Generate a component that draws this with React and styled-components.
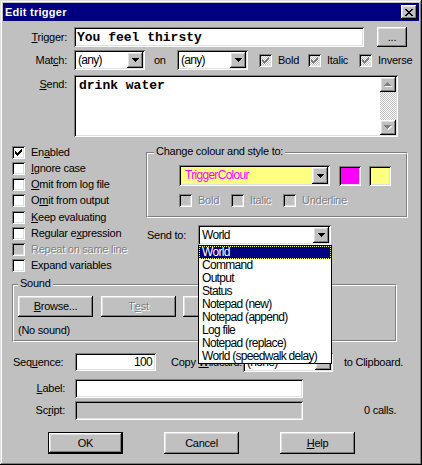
import React from "react"
import styled, { createGlobalStyle, css } from "styled-components"

const GlobalStyle = createGlobalStyle`
	html, body {
		margin: 0;
		padding: 0;
		background: #c0c0c0;
	}
	body {
		font-family: "Liberation Sans", Arial, sans-serif;
		font-size: 11px;
		letter-spacing: -0.25px;
		line-height: 13px;
		color: #000;
	}
	u {
		text-decoration-thickness: 1px;
		text-underline-offset: 1px;
	}
`

// win95 bevels
const raised = css`
	box-shadow: inset -1px -1px #000, inset 1px 1px #fff, inset -2px -2px #808080, inset 2px 2px #dfdfdf;
`
const sunken = css`
	box-shadow: inset 1px 1px #808080, inset -1px -1px #fff, inset 2px 2px #000, inset -2px -2px #dfdfdf;
`
const dither = css`
	background-color: #c0c0c0;
	background-image: conic-gradient(#fff 25%, #c0c0c0 0 50%, #fff 0 75%, #c0c0c0 0);
	background-size: 2px 2px;
`
const disabledText = css`
	color: #808080;
	text-shadow: 1px 1px #fff;
`

const CHECK = ["......#", ".....##", "#...###", "##.###.", "#####..", ".###...", "..#...."]
const DOWN = ["#######", ".#####.", "..###..", "...#..."]
const UP = [...DOWN].reverse()
const CLOSE = ["##....##", ".##..##.", "..####..", "...##...", "..####..", ".##..##.", "##....##"]

const PixSvg = styled.svg`
	display: block;
`

const Pixels = ({ map, color = "#000", shadow }) => {
	const extra = shadow ? 1 : 0
	const cells = (d, fill) =>
		map.flatMap((row, y) =>
			[...row].map((c, x) =>
				c === "#" ? <rect key={`${d}-${x}-${y}`} x={x + d} y={y + d} width="1" height="1" fill={fill} /> : null
			)
		)
	return (
		<PixSvg width={map[0].length + extra} height={map.length + extra} shapeRendering="crispEdges">
			{shadow && cells(1, shadow)}
			{cells(0, color)}
		</PixSvg>
	)
}

const Window = styled.div`
	box-sizing: border-box;
	width: 422px;
	height: 465px;
	padding: 3px;
	background: #c0c0c0;
	display: flex;
	flex-direction: column;
	box-shadow: inset -1px -1px #000, inset 1px 1px #dfdfdf, inset -2px -2px #808080, inset 2px 2px #fff;
`

const TitleBar = styled.div`
	height: 18px;
	background: #000080;
	display: flex;
	align-items: center;
	justify-content: space-between;
`

const Title = styled.span`
	color: #fff;
	font-weight: bold;
	font-size: 11px;
	letter-spacing: 0.25px;
	margin-left: 2px;
`

const CloseButton = styled.span`
	width: 16px;
	height: 14px;
	margin-right: 2px;
	background: #c0c0c0;
	display: flex;
	align-items: center;
	justify-content: center;
	${raised}
`

const Body = styled.div`
	position: relative;
	flex: 1;
	display: flex;
	flex-direction: column;
`

const Row = styled.div`
	display: flex;
	align-items: ${(p) => p.$align || "center"};
	height: ${(p) => p.$h}px;
	margin-top: ${(p) => p.$top}px;
	margin-left: ${(p) => p.$left || 0}px;
	flex-shrink: 0;
`

const FieldLabel = styled.span`
	width: ${(p) => p.$w || 64}px;
	margin-right: ${(p) => p.$gap ?? 7}px;
	padding-top: ${(p) => p.$pt || 0}px;
	text-align: ${(p) => p.$left ? "left" : "right"};
	flex-shrink: 0;
	${(p) => p.$disabled && disabledText}
`

const TextField = styled.div`
	box-sizing: border-box;
	width: ${(p) => p.$w}px;
	height: ${(p) => p.$h || 20}px;
	padding: 0 ${(p) => p.$right ? 4 : 3}px;
	display: flex;
	align-items: center;
	justify-content: ${(p) => p.$right ? "flex-end" : "flex-start"};
	background: ${(p) => p.$disabled ? "#c0c0c0" : "#fff"};
	${sunken}
`

const MonoText = styled.span`
	font-family: "Liberation Mono", "DejaVu Sans Mono", monospace;
	font-weight: bold;
	font-size: 13px;
	letter-spacing: 0;
`

const ValueText = styled.span`
	font-size: 12px;
	letter-spacing: -0.7px;
	color: ${(p) => p.$color || "#000"};
`

const PushButton = styled.span`
	box-sizing: border-box;
	width: ${(p) => p.$w || 75}px;
	height: ${(p) => p.$h || 21}px;
	margin-left: ${(p) => p.$ml || 0}px;
	display: flex;
	align-items: center;
	justify-content: center;
	background: #c0c0c0;
	flex-shrink: 0;
	${raised}
	${(p) => p.$disabled && disabledText}
	${(p) =>
		p.$default &&
		css`
			border: 1px solid #000;
		`}
`

const Combo = styled.div`
	box-sizing: border-box;
	width: ${(p) => p.$w}px;
	height: ${(p) => p.$h || 20}px;
	margin-left: ${(p) => p.$ml || 0}px;
	padding: 2px;
	display: flex;
	background: ${(p) => p.$bg || "#fff"};
	flex-shrink: 0;
	position: relative;
	${sunken}
`

const ComboValue = styled.span`
	flex: 1;
	display: flex;
	align-items: center;
	padding-left: ${(p) => p.$pl ?? 2}px;
	overflow: hidden;
	white-space: nowrap;
`

const ArrowButton = styled.span`
	width: 16px;
	background: #c0c0c0;
	display: flex;
	align-items: center;
	justify-content: center;
	${raised}
`

const Box = styled.span`
	box-sizing: border-box;
	width: 13px;
	height: 13px;
	flex-shrink: 0;
	display: flex;
	align-items: center;
	justify-content: center;
	background: ${(p) => p.$disabled ? "#c0c0c0" : "#fff"};
	${(p) => p.$dither && dither}
	${sunken}
`

const CheckItem = styled.span`
	display: flex;
	align-items: center;
	gap: 6px;
	height: ${(p) => p.$h ? `${p.$h}px` : "auto"};
	width: ${(p) => p.$w ? `${p.$w}px` : "auto"};
	flex-shrink: 0;
	white-space: nowrap;
	${(p) => p.$disabled && disabledText}
`

const CheckBox = ({ label, checked, dither, disabled, w, h }) => (
	<CheckItem $w={w} $h={h} $disabled={disabled}>
		<Box $dither={dither} $disabled={disabled}>
			{checked && <Pixels map={CHECK} color={dither ? "#808080" : "#000"} />}
		</Box>
		<span>{label}</span>
	</CheckItem>
)

const Memo = styled.div`
	box-sizing: border-box;
	width: 324px;
	height: 62px;
	padding: 2px;
	display: flex;
	background: #fff;
	${sunken}
`

const MemoText = styled.div`
	flex: 1;
	padding: 1px 3px;
	line-height: 14px;
`

const ScrollBar = styled.div`
	width: 16px;
	display: flex;
	flex-direction: column;
`

const ScrollArrow = styled.span`
	height: 15px;
	background: #c0c0c0;
	display: flex;
	align-items: center;
	justify-content: center;
	${raised}
`

const ScrollTrack = styled.span`
	flex: 1;
	${dither}
`

const Middle = styled.div`
	display: flex;
	margin-top: 7px;
	flex-shrink: 0;
`

const OptionList = styled.div`
	width: 134px;
	margin-left: 9px;
	display: flex;
	flex-direction: column;
`

const RightColumn = styled.div`
	width: 262px;
	display: flex;
	flex-direction: column;
`

const GroupOuter = styled.div`
	box-sizing: border-box;
	width: ${(p) => p.$w}px;
	height: ${(p) => p.$h}px;
	margin-top: ${(p) => p.$top}px;
	margin-left: ${(p) => p.$left || 0}px;
	border: 1px solid;
	border-color: #808080 #fff #fff #808080;
	flex-shrink: 0;
`

const GroupInner = styled.div`
	box-sizing: border-box;
	height: 100%;
	border: 1px solid;
	border-color: #fff #808080 #808080 #fff;
	display: flex;
	flex-direction: column;
	align-items: flex-start;
`

const Legend = styled.span`
	margin: -9px 0 0 ${(p) => p.$x}px;
	padding: 0 2px;
	background: #c0c0c0;
	line-height: 13px;
`

const Swatch = styled.span`
	box-sizing: border-box;
	width: 22px;
	height: 20px;
	margin-left: ${(p) => p.$ml}px;
	background: ${(p) => p.$color};
	${sunken}
`

const DropList = styled.div`
	position: absolute;
	z-index: 5;
	top: 100%;
	left: 0;
	box-sizing: border-box;
	width: 134px;
	border: 1px solid #000;
	background: #fff;
	display: flex;
	flex-direction: column;
`

const DropItem = styled.span`
	box-sizing: border-box;
	height: 13px;
	padding-left: 2px;
	display: flex;
	align-items: center;
	font-size: 12px;
	letter-spacing: -0.7px;
	white-space: nowrap;
	border: 1px solid transparent;
	${(p) =>
		p.$selected &&
		css`
			background: #000080;
			color: #fff;
			border: 1px dotted #ffff80;
		`}
`

const PlainText = styled.span`
	margin-left: ${(p) => p.$ml || 0}px;
	padding-top: ${(p) => p.$pt || 0}px;
	width: ${(p) => p.$w ? `${p.$w}px` : "auto"};
	white-space: nowrap;
	flex-shrink: 0;
`

const ButtonBar = styled.div`
	display: flex;
	gap: 41px;
	margin: 12px 0 0 45px;
	height: 22px;
`

const SEND_TO = [
	"World",
	"Command",
	"Output",
	"Status",
	"Notepad (new)",
	"Notepad (append)",
	"Log file",
	"Notepad (replace)",
	"World (speedwalk delay)",
]

const OPTIONS = [
	{ label: <>En<u>a</u>bled</>, checked: true },
	{ label: <><u>I</u>gnore case</> },
	{ label: <><u>O</u>mit from log file</> },
	{ label: <>O<u>m</u>it from output</> },
	{ label: <><u>K</u>eep evaluating</> },
	{ label: <>Regular e<u>x</u>pression</> },
	{ label: "Repeat on same line", disabled: true },
	{ label: "Expand variables" },
]

const Arrow = () => (
	<ArrowButton>
		<Pixels map={DOWN} />
	</ArrowButton>
)

const App = () => {
	return (
		<>
			<GlobalStyle />
			<Window>
				<TitleBar>
					<Title>Edit trigger</Title>
					<CloseButton>
						<Pixels map={CLOSE} />
					</CloseButton>
				</TitleBar>
				<Body>
					<Row $top={6} $h={20}>
						<FieldLabel><u>T</u>rigger:</FieldLabel>
						<TextField $w={290}>
							<MonoText>You feel thirsty</MonoText>
						</TextField>
						<PushButton $w={30} $h={20} $ml={13}>...</PushButton>
					</Row>

					<Row $top={3} $h={20}>
						<FieldLabel>Mat<u>c</u>h:</FieldLabel>
						<Combo $w={71}>
							<ComboValue><ValueText>(any)</ValueText></ComboValue>
							<Arrow />
						</Combo>
						<PlainText $w={32} $ml={9}>on</PlainText>
						<Combo $w={71} $ml={-9}>
							<ComboValue><ValueText>(any)</ValueText></ComboValue>
							<Arrow />
						</Combo>
						<Row $h={13} $left={11}>
							<CheckBox label="Bold" checked dither w={49} />
							<CheckBox label="Italic" checked dither w={51} />
							<CheckBox label="Inverse" checked dither />
						</Row>
					</Row>

					<Row $top={5} $h={62} $align="flex-start">
						<FieldLabel $pt={3}><u>S</u>end:</FieldLabel>
						<Memo>
							<MemoText>
								<MonoText>drink water</MonoText>
							</MemoText>
							<ScrollBar>
								<ScrollArrow>
									<Pixels map={UP} color="#808080" shadow="#fff" />
								</ScrollArrow>
								<ScrollTrack />
								<ScrollArrow>
									<Pixels map={DOWN} color="#808080" shadow="#fff" />
								</ScrollArrow>
							</ScrollBar>
						</Memo>
					</Row>

					<Middle>
						<OptionList>
							{OPTIONS.map((o, i) => (
								<CheckBox key={i} label={o.label} checked={o.checked} disabled={o.disabled} h={16.25} />
							))}
						</OptionList>
						<RightColumn>
							<GroupOuter $w={262} $h={66} $top={8}>
								<GroupInner>
									<Legend $x={6}>Change colour and style to:</Legend>
									<Row $top={7} $h={21} $left={31}>
										<Combo $w={151} $h={21} $bg="#ffff80">
											<ComboValue $pl={4}>
												<ValueText $color="#ff00ff">TriggerColour</ValueText>
											</ComboValue>
											<Arrow />
										</Combo>
										<Swatch $ml={9} $color="#ff00ff" />
										<Swatch $ml={8} $color="#ffff80" />
									</Row>
									<Row $top={8} $h={13} $left={31}>
										<CheckBox label="Bold" disabled w={52} />
										<CheckBox label="Italic" disabled w={52} />
										<CheckBox label="Underline" disabled />
									</Row>
								</GroupInner>
							</GroupOuter>
							<Row $top={7} $h={20}>
								<PlainText $w={51} $ml={1}>Send to:</PlainText>
								<Combo $w={133}>
									<ComboValue><ValueText>World</ValueText></ComboValue>
									<Arrow />
									<DropList>
										{SEND_TO.map((item, i) => (
											<DropItem key={item} $selected={i === 0}>{item}</DropItem>
										))}
									</DropList>
								</Combo>
							</Row>
						</RightColumn>
					</Middle>

					<GroupOuter $w={385} $h={58} $top={10} $left={9}>
						<GroupInner>
							<Legend $x={4}>Sound</Legend>
							<Row $top={6} $h={21} $left={4}>
								<PushButton><u>B</u>rowse...</PushButton>
								<PushButton $ml={8} $disabled>T<u>e</u>st</PushButton>
								<PushButton $ml={7} />
							</Row>
							<PlainText $ml={4} $pt={7}>(No sound)</PlainText>
						</GroupInner>
					</GroupOuter>

					<Row $top={11} $h={18} $left={10}>
						<FieldLabel $w={62} $gap={0} $left>Seq<u>u</u>ence:</FieldLabel>
						<TextField $w={81} $h={18} $right>
							<ValueText>100</ValueText>
						</TextField>
						<PlainText $ml={15} $w={72}>Copy <u>W</u>ildcard:</PlainText>
						<Combo $w={90} $h={19}>
							<ComboValue><ValueText>(none)</ValueText></ComboValue>
							<Arrow />
						</Combo>
						<PlainText $ml={11}>to Clipboard.</PlainText>
					</Row>

					<Row $top={8} $h={19}>
						<FieldLabel $w={62} $gap={10}><u>L</u>abel:</FieldLabel>
						<TextField $w={228} $h={19} />
					</Row>

					<Row $top={3} $h={19}>
						<FieldLabel $w={62} $gap={10}>Sc<u>r</u>ipt:</FieldLabel>
						<TextField $w={228} $h={19} $disabled />
						<PlainText $ml={61}>0 calls.</PlainText>
					</Row>

					<ButtonBar>
						<PushButton $h={22} $default>OK</PushButton>
						<PushButton $h={22}>Cancel</PushButton>
						<PushButton $h={22}><u>H</u>elp</PushButton>
					</ButtonBar>
				</Body>
			</Window>
		</>
	)
}

export default App
